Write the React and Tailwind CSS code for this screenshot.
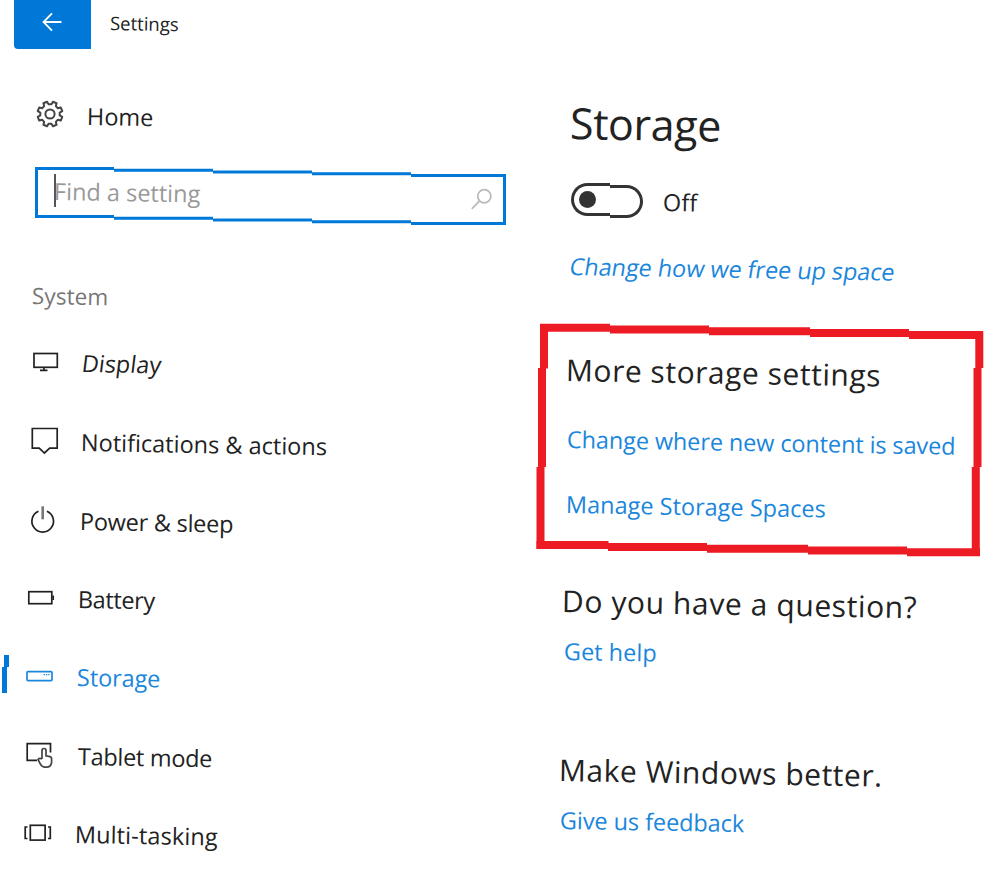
import clsx from 'clsx';

const navItems = [
  { label: 'Display', icon: 'display', row: 'mt-0', text: 'ml-[22px] -skew-x-6' },
  { label: 'Notifications & actions', icon: 'notifications', row: 'mt-[49px]', text: 'ml-[21px]' },
  { label: 'Power & sleep', icon: 'power', row: 'mt-[49px]', text: 'ml-[20px] tracking-[-0.25px]' },
  { label: 'Battery', icon: 'battery', row: 'mt-[48px]', text: 'ml-[18px] tracking-[-0.4px]' },
  { label: 'Storage', icon: 'storage', row: 'mt-[48px]', text: 'ml-[17px] tracking-[-0.1px]', active: true },
  { label: 'Tablet mode', icon: 'tablet', row: 'mt-[49px]', text: 'ml-[18px] tracking-[-0.3px]' },
  { label: 'Multi-tasking', icon: 'multi', row: 'mt-[48px]', text: 'ml-[15px] tracking-[0.1px]' },
];

const icons = {
  display: (
    <>
      <rect x="14" y="5.5" width="23.3" height="13.8" />
      <path d="M24 19.5v3M20 22.3h7.5" />
    </>
  ),
  notifications: <path d="M12.3 1.5h24.9v19.7h-7.5l-5.3 4.8-5.2-4.8h-6.9z" />,
  power: (
    <>
      <path d="M18.5 5.3a10.8 10.8 0 1 0 8.4 0" />
      <path d="M22.7.3v13" stroke="#777" strokeWidth="2.6" />
    </>
  ),
  battery: (
    <>
      <rect x="8.8" y="7.7" width="23" height="12" />
      <path d="M33.2 11.5v4.5" />
    </>
  ),
  storage: (
    <>
      <rect x="7" y="9.6" width="25" height="9" rx="1" />
      <path d="M23.5 12.6h6" strokeWidth="1.3" strokeDasharray="1.4 1" />
    </>
  ),
  tablet: (
    <>
      <path d="M17 19.4H7.2V2.6h23.3v9" />
      <path
        d="M22 18V9.5a2 2 0 0 1 4 0v5.3l4 .8q1.800.6 1.600 2.400v3.500q-.7 4.500-5.100 4.700h-1.500q-3 0-4.600-3L18 18.500q1.600-2 4-.5"
        stroke="#444"
      />
    </>
  ),
  multi: (
    <>
      <rect x="10.3" y="6.3" width="14.8" height="14.8" />
      <path d="M7.5 8H5.2v11.5h2.3M28 8h2.3v11.5H28" />
    </>
  ),
};

// The page leans about one degree, so every line of text does too
const Line = ({ className, children }) => (
  <span className={clsx('block w-max origin-left rotate-[1deg] whitespace-pre', className)}>{children}</span>
);

const GearIcon = () => {
  const points = [];
  for (let i = 0; i < 8; i++) {
    const mid = (i + 0.5) * 45;
    [[-14, 9.8], [-9, 12.6], [9, 12.6], [14, 9.8]].forEach(([offset, r]) => {
      const a = ((mid + offset) * Math.PI) / 180;
      points.push(`${(14 + r * Math.cos(a)).toFixed(2)},${(14 + r * Math.sin(a)).toFixed(2)}`);
    });
  }
  return (
    <svg viewBox="0 0 28 28" className="-mt-px h-7 w-7" fill="none" stroke="#444" strokeWidth="2" strokeLinejoin="round">
      <polygon points={points.join(' ')} />
      <circle cx="14" cy="14" r="4.6" />
    </svg>
  );
};

const SearchBox = () => (
  <div className="relative mt-[36px] ml-[35px] flex h-[51px] w-[471px]">
    <div className="w-[79px] border-y-3 border-l-3 border-[#0078d7]" />
    <div className="w-[99px] translate-y-[1.75px] border-y-3 border-[#0078d7]" />
    <div className="w-[99px] translate-y-[3.5px] border-y-3 border-[#0078d7]" />
    <div className="w-[99px] translate-y-[5.25px] border-y-3 border-[#0078d7]" />
    <div className="w-[95px] translate-y-[7px] border-y-3 border-r-3 border-[#0078d7]" />
    <div className="absolute top-[7px] left-[19px] h-[33px] w-[2px] bg-[#555]" />
    <Line className="absolute top-[9px] left-[19px] text-[23.5px] leading-[30px] text-[#999]">Find a setting</Line>
    <svg viewBox="0 0 22 22" className="absolute top-[21px] left-[436px] h-[22px] w-[22px]" fill="none" stroke="#bbb" strokeWidth="1.8">
      <circle cx="13.3" cy="8.3" r="6.6" />
      <path d="M8.5 13L.8 20.8" />
    </svg>
  </div>
);

const Toggle = () => (
  <div className="relative ml-[31px] flex h-[33px]">
    <div className="w-[39px] rounded-l-full border-3 border-r-0 border-[#333]" />
    <div className="w-[33px] translate-y-[2px] rounded-r-full border-3 border-l-0 border-[#333]" />
    <div className="absolute top-[8px] left-[8px] h-[17px] w-[17px] rounded-full bg-[#333]" />
  </div>
);

// Hand-drawn red marker around the storage links
const Highlight = () => (
  <svg viewBox="536 323 448 234" className="absolute top-[323px] -left-[4px] h-[234px] w-[448px]" fill="none" stroke="#ed1c24" strokeWidth="8">
    <path d="M540 327.7h70M610 329.5h99M709 331.2h101M810 333h99M909 335h74" />
    <path d="M544 324v44.5M542 368v99M540.5 467v82" />
    <path d="M979.3 331.5v36.5M977.5 368v99M975.8 467v89" />
    <path d="M536.5 545h72M608 547h99M707 548.7h101M808 550.5h99M907 552.3h73" />
  </svg>
);

export default function App() {
  return (
    <div className="flex h-[886px] w-[1000px] overflow-hidden bg-white font-['Open_Sans',sans-serif] text-[#222]">
      {/* Navigation */}
      <div className="w-[540px] shrink-0">
        <div className="flex h-[49px]">
          <div className="ml-[14px] flex h-[48.5px] w-[76.5px] justify-center rounded-bl-sm bg-[#0078d7]">
            <svg viewBox="0 0 20 20" className="mt-[12px] h-[20px] w-[20px]" fill="none" stroke="white" strokeWidth="1.8">
              <path d="M19.5 10H1.5M10 1.3L1.5 10l8.5 8.7" />
            </svg>
          </div>
          <Line className="mt-[8px] ml-[19.5px] text-[18.5px] leading-[30px]">Settings</Line>
        </div>

        <div className="mt-[52px] flex h-[30px] pl-[36px]">
          <GearIcon />
          <Line className="ml-[22.5px] text-[23.5px] leading-[30px]">Home</Line>
        </div>

        <SearchBox />

        <Line className="mt-[63px] ml-[32px] text-[22.5px] leading-[30px] tracking-[0.1px] text-[#777]">System</Line>

        <nav className="mt-[37px]">
          {navItems.map((item) => (
            <div key={item.label} className={clsx('relative flex h-[30px] pl-[20px]', item.row, item.active && 'text-[#1a86dc]')}>
              {item.active && (
                <div className="absolute -top-[7.5px] left-[2px]">
                  <div className="ml-[1.5px] h-[12.5px] w-[5px] bg-[#0078d7]" />
                  <div className="h-[26px] w-[5px] bg-[#0078d7]" />
                </div>
              )}
              <svg viewBox="0 0 40 32" className="h-8 w-10 shrink-0" fill="none" stroke="currentColor" strokeWidth="1.7">
                {icons[item.icon]}
              </svg>
              <Line className={clsx('text-[23.5px] leading-[30px]', item.text)}>{item.label}</Line>
            </div>
          ))}
        </nav>
      </div>

      {/* Storage settings */}
      <div className="relative w-[460px] pt-[92.5px]">
        <Highlight />
        <Line className="ml-[30px] text-[43px] leading-[60px] tracking-[-0.4px]">Storage</Line>
        <div className="mt-[30.5px] flex h-[35px]">
          <Toggle />
          <Line className="mt-[4px] ml-[20px] text-[23.5px] leading-[30px]">Off</Line>
        </div>
        <Line className="mt-[33px] ml-[30px] -skew-x-8 text-[23.5px] leading-[30px] tracking-[-0.08px] text-[#1a86dc]">Change how we free up space</Line>

        <Line className="mt-[68.5px] ml-[26px] text-[30px] leading-[40px] tracking-[0.53px]">More storage settings</Line>
        <Line className="mt-[34.5px] ml-[27px] text-[23.5px] leading-[30px] tracking-[-0.12px] text-[#1a86dc]">Change where new content is saved</Line>
        <Line className="mt-[35px] ml-[26px] text-[23.5px] leading-[30px] text-[#1a86dc]">Manage Storage Spaces</Line>

        <Line className="mt-[62px] ml-[22px] text-[30px] leading-[40px] tracking-[0.6px]">Do you have a question?</Line>
        <Line className="mt-[15px] ml-[24px] text-[23.5px] leading-[30px] text-[#1a86dc]">Get help</Line>

        <Line className="mt-[84px] ml-[19px] text-[30px] leading-[40px] tracking-[0.53px]">Make Windows better.</Line>
        <Line className="mt-[15px] ml-[20px] text-[23.5px] leading-[30px] tracking-[-0.08px] text-[#1a86dc]">Give us feedback</Line>
      </div>
    </div>
  );
}
